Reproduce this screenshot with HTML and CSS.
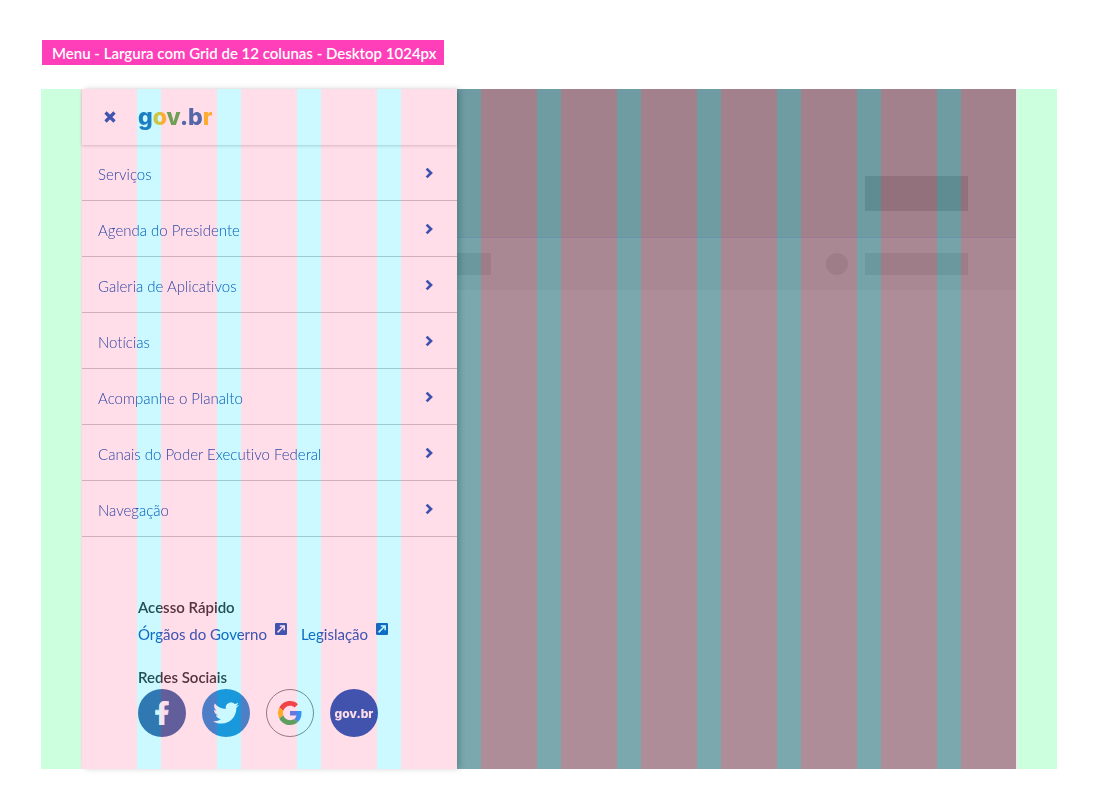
FILE: index.html
```html
<!DOCTYPE html>
<html lang="pt-BR">
<head>
<meta charset="utf-8">
<meta name="viewport" content="width=device-width, initial-scale=1">
<title>Menu - Largura com Grid de 12 colunas</title>
<link rel="stylesheet" href="styles.css">
</head>
<body>
<svg class="symbols" aria-hidden="true">
  <symbol id="chevron" viewBox="0 0 8 12"><path d="M1.600 1.600 6 6 1.600 10.400" fill="none" stroke="currentColor" stroke-width="2.700"/></symbol>
  <symbol id="external" viewBox="0 0 12 12"><rect width="12" height="12" rx="1.200" fill="currentColor"/><path d="M2.600 9.400 8.200 3.800M4.800 2.900h4.400v4.400" fill="none" stroke="#fff" stroke-width="1.500"/></symbol>
</svg>
<main class="sheet">
  <h1 class="tag">Menu - Largura com Grid de 12 colunas - Desktop 1024px</h1>
  <div class="canvas">
    <div class="page" aria-hidden="true">
      <div class="page-top"><div class="block block-tall"></div></div>
      <div class="page-bar">
        <div class="block block-nav"></div>
        <div class="dot"></div>
        <div class="block"></div>
      </div>
    </div>
    <aside class="menu">
      <header class="menu-head">
        <button class="close" type="button" aria-label="Fechar menu">
          <svg width="12" height="12" viewBox="0 0 12 12"><path d="M1.500 1.500 10.500 10.500M10.500 1.500 1.500 10.500" stroke="currentColor" stroke-width="3.200"/></svg>
        </button>
        <a class="logo" href="#"><span class="c-blue">g</span><span class="c-yellow">o</span><span class="c-green">v</span><span class="c-indigo">.b</span><span class="c-yellow">r</span></a>
      </header>
      <nav class="items">
        <a href="#">Serviços<svg><use href="#chevron"/></svg></a>
        <a href="#">Agenda do Presidente<svg><use href="#chevron"/></svg></a>
        <a href="#">Galeria de Aplicativos<svg><use href="#chevron"/></svg></a>
        <a href="#">Notícias<svg><use href="#chevron"/></svg></a>
        <a href="#">Acompanhe o Planalto<svg><use href="#chevron"/></svg></a>
        <a href="#">Canais do Poder Executivo Federal<svg><use href="#chevron"/></svg></a>
        <a href="#">Navegação<svg><use href="#chevron"/></svg></a>
      </nav>
      <footer class="menu-foot">
        <h2>Acesso Rápido</h2>
        <div class="quick">
          <a href="#">Órgãos do Governo<svg><use href="#external"/></svg></a>
          <a href="#">Legislação<svg><use href="#external"/></svg></a>
        </div>
        <h2>Redes Sociais</h2>
        <div class="social">
          <a class="facebook" href="#" aria-label="Facebook"><svg width="24" height="24" viewBox="-96 0 512 512"><path fill="currentColor" stroke="currentColor" stroke-width="16" d="M279.140 288l14.220-92.660h-88.910v-60.130c0-25.350 12.420-50.060 52.240-50.060h40.420V6.260S260.430 0 225.360 0c-73.220 0-121.080 44.380-121.080 124.720v70.620H22.890V288h81.390v224h100.170V288z"/></svg></a>
          <a class="twitter" href="#" aria-label="Twitter"><svg width="26" height="26" viewBox="0 0 512 512"><path fill="currentColor" d="M459.370 151.716c.325 4.548.325 9.097.325 13.645 0 138.720-105.583 298.558-298.558 298.558-59.452 0-114.680-17.219-161.137-47.106 8.447.974 16.568 1.299 25.340 1.299 49.055 0 94.213-16.568 130.274-44.832-46.132-.975-84.792-31.188-98.112-72.772 6.498.974 12.995 1.624 19.818 1.624 9.421 0 18.843-1.300 27.614-3.573-48.081-9.747-84.143-51.980-84.143-102.985v-1.299c13.969 7.797 30.214 12.670 47.431 13.319-28.264-18.843-46.781-51.005-46.781-87.391 0-19.492 5.197-37.360 14.294-52.954 51.655 63.675 129.300 105.258 216.365 109.807-1.624-7.797-2.599-15.918-2.599-24.040 0-57.828 46.782-104.934 104.934-104.934 30.213 0 57.502 12.670 76.670 33.137 23.715-4.548 46.456-13.320 66.599-25.340-7.798 24.366-24.366 44.833-46.132 57.827 21.117-2.273 41.584-8.122 60.426-16.243-14.292 20.791-32.161 39.308-52.628 54.253z"/></svg></a>
          <a class="google" href="#" aria-label="Google"><svg width="24" height="24" viewBox="0 0 48 48"><path fill="#f0655e" d="M24 9.500c3.540 0 6.710 1.220 9.210 3.600l6.850-6.850C35.900 2.380 30.470 0 24 0 14.620 0 6.510 5.380 2.560 13.220l7.980 6.190C12.430 13.720 17.740 9.500 24 9.500z"/><path fill="#6699f6" d="M46.980 24.550c0-1.570-.15-3.090-.38-4.550H24v9.020h12.940c-.58 2.960-2.260 5.480-4.780 7.180l7.730 6c4.510-4.180 7.090-10.360 7.090-17.650z"/><path fill="#ffcb38" d="M10.530 28.590c-.48-1.450-.76-2.990-.76-4.590s.27-3.140.76-4.590l-7.980-6.190C.92 16.460 0 20.120 0 24c0 3.880.92 7.540 2.560 10.780l7.970-6.190z"/><path fill="#5fbf76" d="M24 48c6.480 0 11.930-2.130 15.890-5.810l-7.730-6c-2.150 1.450-4.920 2.300-8.160 2.300-6.260 0-11.570-4.220-13.470-9.910l-7.980 6.190C6.510 42.620 14.620 48 24 48z"/></svg></a>
          <a class="govbr" href="#">gov.br</a>
        </div>
      </footer>
    </aside>
    <div class="grid" aria-hidden="true">
      <div class="columns">
        <i></i><i></i><i></i><i></i><i></i><i></i><i></i><i></i><i></i><i></i><i></i><i></i>
      </div>
    </div>
  </div>
</main>
</body>
</html>
```
FILE: styles.css
```css
* { box-sizing: border-box; }

body {
  margin: 0;
  background: #fff;
  font-family: Lato, "Open Sans", sans-serif;
  font-size: 15px;
  font-variant-ligatures: none;
}

a { color: inherit; text-decoration: none; }

.symbols { display: none; }

.sheet { padding: 40px 43px 40px 41px; }

.tag {
  width: fit-content;
  margin: 0 0 24px 1px;
  padding: 1px 8px 0 10px;
  background: #ff3fb9;
  color: #fff;
  font-size: 15px;
  font-weight: 600;
  line-height: 24px;
}

/* Page, menu and column grid share one cell, stacked in source order. */
.canvas {
  display: grid;
  isolation: isolate;
  background: #fff;
}

.page, .menu, .grid { grid-area: 1 / 1; }

.page { margin: 0 41px; background: #aeaeae; }

.page-top {
  display: flex;
  justify-content: flex-end;
  align-items: flex-start;
  height: 149px;
  padding: 87px 48px 0;
  background: #a2a2a2;
  border-bottom: 1px solid #9a9caa;
}

.page-bar {
  display: flex;
  align-items: center;
  gap: 17px;
  height: 52px;
  padding: 0 48px 0 16px;
  background: #a9a9a9;
}

.block { width: 103px; height: 22px; background: #9e9e9e; }
.block-tall { height: 35px; background: #929292; }
.block-nav { width: 393px; margin-right: auto; }
.dot { width: 22px; height: 22px; border-radius: 50%; background: #9e9e9e; }

.menu {
  width: 375px;
  margin-left: 41px;
  background: #fff;
  box-shadow: 3px 0 6px rgba(0, 0, 0, .16);
  color: #4074c4;
}

.menu-head {
  display: flex;
  align-items: center;
  height: 56px;
  box-shadow: 0 1px 3px rgba(0, 0, 0, .16);
}

.close {
  display: grid;
  place-items: center;
  width: 56px;
  height: 56px;
  padding: 0;
  border: 0;
  background: none;
  color: inherit;
}

.logo {
  font-family: Inter, "Open Sans", sans-serif;
  font-size: 23px;
  font-weight: 800;
  line-height: 56px;
}

.c-blue { color: #4f86c0; }
.c-indigo { color: #5588be; }
.c-yellow { color: #ffcd44; }
.c-green { color: #6dc16b; }

.items a {
  display: flex;
  justify-content: space-between;
  align-items: center;
  height: 56px;
  padding: 3px 24px 0 16px;
  border-bottom: 1px solid #d0d0d0;
  color: #3366b8;
  font-weight: 300;
}

.items svg { width: 8px; height: 12px; margin-bottom: 3px; color: #4074c4; }

.menu-foot { padding: 59px 16px 32px 56px; }

.menu-foot h2 {
  margin: 0;
  color: #555;
  font-size: 15px;
  font-weight: 600;
  line-height: 22px;
}

.quick {
  display: flex;
  gap: 14px;
  margin: 4px 0 20px;
  line-height: 24px;
}

.quick a { display: flex; gap: 8px; }
.quick svg { width: 12px; height: 12px; margin-top: 1px; }

.social { display: flex; gap: 16px; margin-top: 1px; }

.social a {
  display: grid;
  place-items: center;
  width: 48px;
  height: 48px;
  border-radius: 50%;
  color: #fff;
}

.facebook { background: #627fb1; }
.twitter { background: #4d9fdc; }
.google { border: 1px solid #999; }

.govbr {
  background: #4274c4;
  font-family: Inter, "Open Sans", sans-serif;
  font-size: 12px;
  font-weight: 800;
}

/* Tints are subtracted from whatever lies below. */
.grid {
  padding: 0 40px;
  background: linear-gradient(#330022, #330022) left / 40px 100% no-repeat, linear-gradient(#330022, #330022) right / 40px 100% no-repeat;
  mix-blend-mode: difference;
  pointer-events: none;
}

.columns {
  display: grid;
  grid-template-columns: repeat(12, 1fr);
  gap: 24px;
  height: 100%;
  background: #330700;
}

.columns i { background: #002116; }
```
